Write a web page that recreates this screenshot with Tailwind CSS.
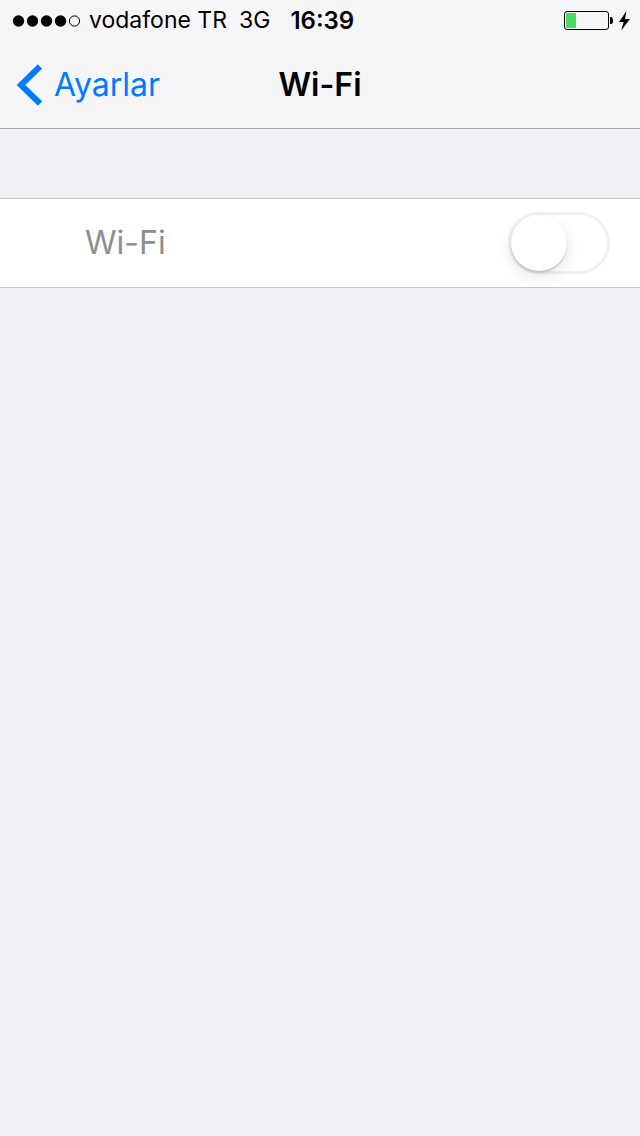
<!DOCTYPE html>
<html lang="tr">
<head>
  <meta charset="UTF-8">
  <meta name="viewport" content="width=device-width, initial-scale=1">
  <title>Wi-Fi</title>
  <script src="https://cdn.jsdelivr.net/npm/@tailwindcss/browser@4"></script>
</head>
<body class="bg-[#efeff4] min-h-screen font-[Inter,sans-serif] text-black">

  <header class="bg-[#f6f6f8] border-b border-[#a7a7ac]">
    <!-- Status bar -->
    <div class="flex items-center justify-between h-[41px] pl-3 pr-2 text-[23px] leading-[41px]">
      <div class="flex items-center">
        <svg class="w-[69px] h-3 mr-2" viewBox="0 0 69 12" aria-hidden="true">
          <circle cx="6.5" cy="6" r="5.7" />
          <circle cx="20.5" cy="6" r="5.7" />
          <circle cx="34.5" cy="6" r="5.7" />
          <circle cx="48.5" cy="6" r="5.7" />
          <circle cx="62.5" cy="6" r="5.1" fill="none" stroke="#000" stroke-width="1" />
        </svg>
        <span>vodafone TR</span>
        <span class="ml-3">3G</span>
        <span class="ml-5 text-[24px] font-semibold">16:39</span>
      </div>
      <svg class="w-[68px] h-5" viewBox="0 0 68 20" aria-hidden="true">
        <rect x="0.5" y="0.5" width="44" height="18" rx="2.5" fill="none" stroke="#000" stroke-width="1" />
        <rect x="2" y="2" width="10" height="15" rx="1" fill="#4cd964" />
        <path d="M46 6h1c1.400 0 2 1.500 2 3.500s-.6 3.500-2 3.500h-1z" />
        <path d="M62.500 0L55 11h4.600L57.200 19.500 66 8h-5z" />
      </svg>
    </div>

    <!-- Nav bar -->
    <nav class="grid grid-cols-[1fr_auto_1fr] items-center h-[87px] px-4 text-[32px] leading-[44px]">
      <a href="#" class="flex items-center gap-3 text-[#007aff]">
        <svg class="w-[26px] h-[42px]" viewBox="0 0 26 42" aria-hidden="true">
          <path d="M24 2.500L5 21l19 18.500" fill="none" stroke="currentColor" stroke-width="6" />
        </svg>
        <span>Ayarlar</span>
      </a>
      <h1 class="font-semibold">Wi-Fi</h1>
    </nav>
  </header>

  <main class="pt-[69px]">
    <div class="flex items-center justify-between bg-white border-y border-[#c8c7cc] h-[90px] pl-[85px] pr-[30px]">
      <label for="wifi" class="text-[32px] leading-[44px] text-[#8e8e8e]">Wi-Fi</label>
      <input id="wifi" type="checkbox" role="switch" disabled
        class="appearance-none w-[102px] h-[62px] rounded-full border-3 border-[#f2f2f2] bg-white before:block before:size-14 before:rounded-full before:bg-white before:shadow-[0_6px_16px_rgba(0,0,0,0.1),0_2px_2px_rgba(0,0,0,0.14)] checked:bg-[#4cd964] checked:before:ml-10" />
    </div>
  </main>

</body>
</html>
